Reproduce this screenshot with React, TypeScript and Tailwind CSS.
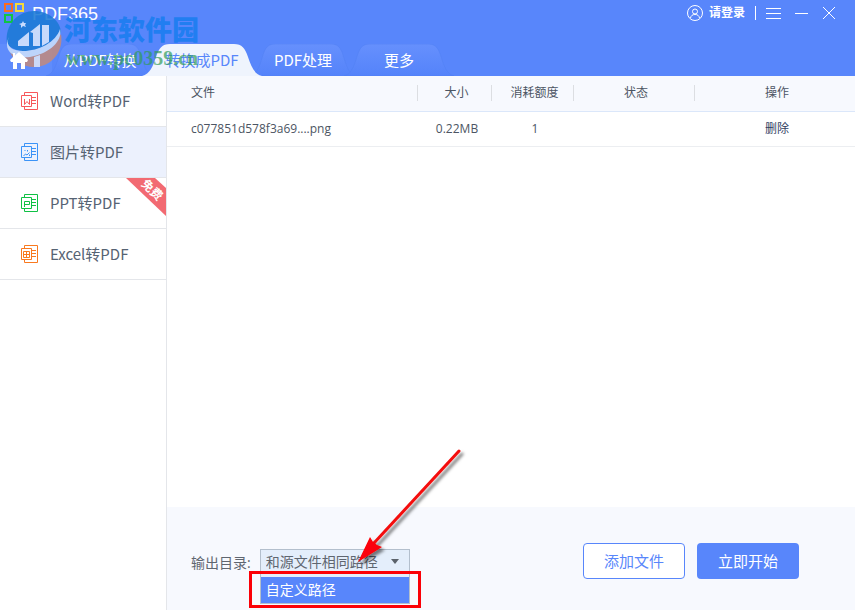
import { useState } from "react"
import clsx from "clsx"

const TABS = ["从PDF转换", "转换成PDF", "PDF处理", "更多"]
const TAB_WIDTHS = ["w-24", "w-[108px]", "w-[94px]", "w-[98px]"]

const MENU = [
    { name: "Word转PDF", color: "text-[#f7585b]", glyph: "M3.500 7V12.500L6 9.500L8.500 12.500V7" },
    { name: "图片转PDF", color: "text-[#3b93f7]", glyph: "M2.500 13L4.500 11L6 12L8.500 9.500M8.500 11.500V13M3.500 7.500H4.500M6.500 7V8.500" },
    { name: "PPT转PDF", color: "text-[#0fc144]", glyph: "M3.500 13V7.500H8.500V10.500H3.500" },
    { name: "Excel转PDF", color: "text-[#f9791f]", glyph: "M2.500 6.500H8.500V12.500H2.500ZM5.500 6.500V12.500M2.500 9.500H8.500" },
]
const FREE_ITEM = 2

const FILES = [{ name: "c077851d578f3a69....png", size: "0.22MB", cost: 1 }]

function TabShape({ active }: { active: boolean }) {
    return (
        <svg
            className="absolute inset-y-0 -left-1.5 h-full w-[calc(100%+12px)]"
            viewBox="0 0 120 32"
            preserveAspectRatio="none"
            aria-hidden="true"
        >
            <defs>
                <linearGradient id="tab-fill" x1="0" y1="0" x2="0" y2="1">
                    <stop offset="0" stopColor="#6690fd" />
                    <stop offset="1" stopColor="#5483fa" />
                </linearGradient>
            </defs>
            <path
                d="M0 32C8 30 11 22 14 13C17 4 20 0 28 0H92C100 0 103 4 106 13C109 22 112 30 120 32Z"
                fill={active ? "#eff4fd" : "url(#tab-fill)"}
                stroke={active ? "none" : "#507ff3"}
                strokeOpacity=".5"
            />
        </svg>
    )
}

function FileIcon({ glyph, className }: { glyph: string; className: string }) {
    return (
        <svg className={className} width="17" height="18" viewBox="0 0 17 18" fill="none" stroke="currentColor" aria-hidden="true">
            <path d="M3.500 3.500V.5H16.500V17.500H3.500V14.500" />
            <path d="M.5 3.500H10.500V14.500H.5Z" />
            <path d="M11 5.500h4M11 8.500h4M11 11.500h4" />
            <path d={glyph} />
        </svg>
    )
}

function FreeRibbon() {
    return (
        <svg className="absolute right-0 top-0 h-[38px] w-10" viewBox="0 0 40 38" aria-label="免费">
            <path d="M0 0H29L40 10V38Z" fill="#f26a72" />
            <text x="26" y="16" transform="rotate(43 26 12)" textAnchor="middle" fill="#fff" className="text-[12px] font-bold">
                免费
            </text>
        </svg>
    )
}

function Watermark() {
    return (
        <div className="pointer-events-none absolute left-1.5 top-2.5 z-20 flex gap-1">
            <svg width="56" height="58" viewBox="0 0 56 58" aria-hidden="true">
                <g opacity=".88">
                    <path d="M1 34C-2 15 12 1 28 1C43 1 54 11 55 22C49 36 16 50 1 34Z" fill="#1c7ad6" />
                    <path d="M55 24C58 42 45 57 28 57C16 57 7 50 4 42C22 51 46 42 55 24Z" fill="#c08a80" />
                    <path d="M3 27C-1 35 5 41 17 41C33 41 50 32 54 19C57 31 43 44 24 47C8 49-4 41 3 27Z" fill="#cadffb" />
                    <path d="M12 31L23 22V36H12ZM24 22L34 14V36H27V23ZM36 15H43V32L36 36Z" fill="#d7e5fc" />
                    <path d="M28 47L34 45V57H28Z" fill="#dbe4f8" />
                    <path d="M17 11l1 2h2l-1 2l1 2l-3-1l-2 2v-3l-2-1l3-1Z" fill="#d8e7ff" />
                </g>
            </svg>
            <div className="whitespace-nowrap pt-1">
                <p className="-ml-0.5 text-[27px] leading-8 font-black text-[#1a7df0]/90">河东软件园</p>
                <p className="font-['Liberation_Serif',serif] text-xl leading-6 font-bold text-[#2f9b57]/70">www.pc0359.cn</p>
            </div>
        </div>
    )
}

function Header({ tab, onTab }: { tab: number; onTab: (i: number) => void }) {
    return (
        <header className="bg-[#5886fb] text-white">
            <div className="flex h-11 items-start justify-between">
                <div className="flex items-start gap-2 pl-1 pt-[3px]">
                    <svg width="20" height="20" viewBox="0 0 20 20" fill="none" strokeWidth="2" aria-hidden="true">
                        <path d="M1 1V8H8V1Z" stroke="#fb6b1f" />
                        <path d="M12 1V8H19V1Z" stroke="#f5d83c" />
                        <path d="M1 12V19H8V12Z" stroke="#10c545" />
                    </svg>
                    <h1 className="font-['Liberation_Sans',sans-serif] text-lg leading-[22px] font-medium">PDF365</h1>
                </div>
                <div className="flex h-6 items-center pt-0.5 pr-[19px]">
                    <button className="flex items-center gap-1.5 text-xs font-bold">
                        <svg width="16" height="16" viewBox="0 0 16 16" fill="none" stroke="currentColor" aria-hidden="true">
                            <circle cx="8" cy="8" r="7.500" />
                            <circle cx="8" cy="6.500" r="2.500" />
                            <path d="M3.500 13C4 10.500 5.500 9.500 8 9.500S12 10.500 12.500 13" />
                        </svg>
                        请登录
                    </button>
                    <span className="mx-2.5 h-3.5 w-px bg-white" />
                    <button aria-label="菜单">
                        <svg width="15" height="14" viewBox="0 0 15 14" stroke="currentColor">
                            <path d="M0 2.500H15M0 7.500H15M0 12.500H15" />
                        </svg>
                    </button>
                    <button aria-label="最小化" className="ml-3.5">
                        <svg width="13" height="14" viewBox="0 0 13 14" stroke="currentColor">
                            <path d="M0 7.500H13" />
                        </svg>
                    </button>
                    <button aria-label="关闭" className="ml-3.5">
                        <svg width="14" height="14" viewBox="0 0 14 14" stroke="currentColor">
                            <path d="M1 1L13 13M13 1L1 13" />
                        </svg>
                    </button>
                </div>
            </div>
            <nav className="flex h-8 text-[15px]">
                <button aria-label="首页" className="flex w-[52px] items-center bg-[#5f8cfc] pl-2.5">
                    <svg className="relative z-30" width="18" height="17" viewBox="0 0 18 17" fill="currentColor" aria-hidden="true">
                        <path d="M9 0L18 8L17 10H15V17H11V11H7V17H3V10H1L0 8L3 5V1H5V3.500Z" />
                    </svg>
                </button>
                {TABS.map((name, i) => (
                    <button
                        key={name}
                        onClick={() => onTab(i)}
                        className={clsx(
                            "relative font-['Noto_Sans_CJK_SC',sans-serif]",
                            TAB_WIDTHS[i],
                            i === tab && "z-10 text-[#5886fb]"
                        )}
                    >
                        <TabShape active={i === tab} />
                        <span className="relative">{name}</span>
                    </button>
                ))}
            </nav>
        </header>
    )
}

function Sidebar({ current, onSelect }: { current: number; onSelect: (i: number) => void }) {
    return (
        <aside className="w-[167px] shrink-0 border-r border-[#e4e6ea] font-['Noto_Sans_CJK_SC',sans-serif]">
            {MENU.map((item, i) => (
                <button
                    key={item.name}
                    onClick={() => onSelect(i)}
                    className={clsx(
                        "relative flex h-[51px] w-full items-center gap-3 border-b border-[#e4e6ea] pl-[21px] text-[15px] text-[#566373]",
                        i === current && "bg-[#ecf1fd]"
                    )}
                >
                    <FileIcon glyph={item.glyph} className={item.color} />
                    {item.name}
                    {i === FREE_ITEM && <FreeRibbon />}
                </button>
            ))}
        </aside>
    )
}

function FileTable() {
    return (
        <table className="w-full table-fixed text-center text-xs text-[#4c5563]">
            <colgroup>
                <col className="w-[251px]" />
                <col className="w-[74px]" />
                <col className="w-[82px]" />
                <col className="w-[121px]" />
                <col />
            </colgroup>
            <thead className="bg-[#f7f9fe]">
                <tr className="h-[35px] border-b border-[#dbe7fa]">
                    {["文件", "大小", "消耗额度", "状态", "操作"].map((title, i) => (
                        <th key={title} className="p-0 font-normal">
                            <div
                                className={clsx(
                                    "leading-4",
                                    i === 0 ? "pl-6 text-left" : "pl-1",
                                    i < 4 && "border-r border-[#dcdee2]"
                                )}
                            >
                                {title}
                            </div>
                        </th>
                    ))}
                </tr>
            </thead>
            <tbody>
                {FILES.map((file) => (
                    <tr key={file.name} className="h-[35px] border-b border-[#eceef1]">
                        <td className="p-0 pl-6 text-left">{file.name}</td>
                        <td className="p-0 pl-1">{file.size}</td>
                        <td className="p-0 pl-1">{file.cost}</td>
                        <td className="p-0"></td>
                        <td className="p-0 pl-1">
                            <button className="text-[#31415f]">删除</button>
                        </td>
                    </tr>
                ))}
            </tbody>
        </table>
    )
}

function OutputPath() {
    return (
        <div className="flex items-center gap-2 text-sm text-[#5f6670]">
            <label htmlFor="output">输出目录:</label>
            <div className="relative ml-px w-[150px]">
                <select
                    id="output"
                    className="block h-7 w-full appearance-none border border-b-0 border-[#b3bfcd] bg-[#e4eefb] px-[5px] pb-1"
                >
                    <option>和源文件相同路径</option>
                </select>
                <svg className="absolute right-2.5 top-2.5 h-1.5 w-2.5" viewBox="0 0 10 6" aria-hidden="true">
                    <path d="M1 0H9L5 5Z" fill="#5b626b" />
                </svg>
                <ul role="listbox" className="absolute inset-x-0 top-full border border-t-0 border-[#b3bfcd]">
                    <li role="option" aria-selected="true" className="bg-[#5886fb] px-[5px] leading-[26px] text-white">
                        自定义路径
                    </li>
                </ul>
                <div className="pointer-events-none absolute -left-[11px] top-[22px] h-[37px] w-[172px] border-3 border-[#fb0007]" />
                <svg
                    className="pointer-events-none absolute left-[90px] top-[-104px]"
                    width="120"
                    height="124"
                    viewBox="0 0 120 124"
                    aria-hidden="true"
                >
                    <defs>
                        <filter id="arrow-shadow" x="-20%" y="-20%" width="150%" height="150%">
                            <feDropShadow dx="3" dy="3" stdDeviation="1.500" floodColor="#000" floodOpacity=".5" />
                        </filter>
                    </defs>
                    <g filter="url(#arrow-shadow)">
                        <path d="M109 6L24 98" stroke="#f40a0a" strokeWidth="3" strokeLinecap="round" />
                        <path d="M8 117L20 92L23 97L27 100L32 102Z" fill="#fb0007" />
                    </g>
                </svg>
            </div>
        </div>
    )
}

export default function App() {
    const [tab, setTab] = useState(1)
    const [current, setCurrent] = useState(1)

    return (
        <div className="relative flex min-h-screen flex-col bg-white font-['Open_Sans','Noto_Sans_CJK_SC',sans-serif]">
            <Header tab={tab} onTab={setTab} />
            <div className="flex flex-1">
                <Sidebar current={current} onSelect={setCurrent} />
                <main className="flex min-w-0 flex-1 flex-col">
                    <div className="flex-1">
                        <FileTable />
                    </div>
                    <footer className="flex items-start justify-between bg-[#f7f9fe] pt-9 pr-14 pb-[31px] pl-6">
                        <div className="pt-1.5">
                            <OutputPath />
                        </div>
                        <div className="flex gap-3 font-['Noto_Sans_CJK_SC',sans-serif] text-[15px]">
                            <button className="h-9 w-[102px] rounded border border-[#5886fb] bg-white text-[#5886fb]">添加文件</button>
                            <button className="h-9 w-[102px] rounded bg-[#5886fb] text-white">立即开始</button>
                        </div>
                    </footer>
                </main>
            </div>
            <Watermark />
        </div>
    )
}
